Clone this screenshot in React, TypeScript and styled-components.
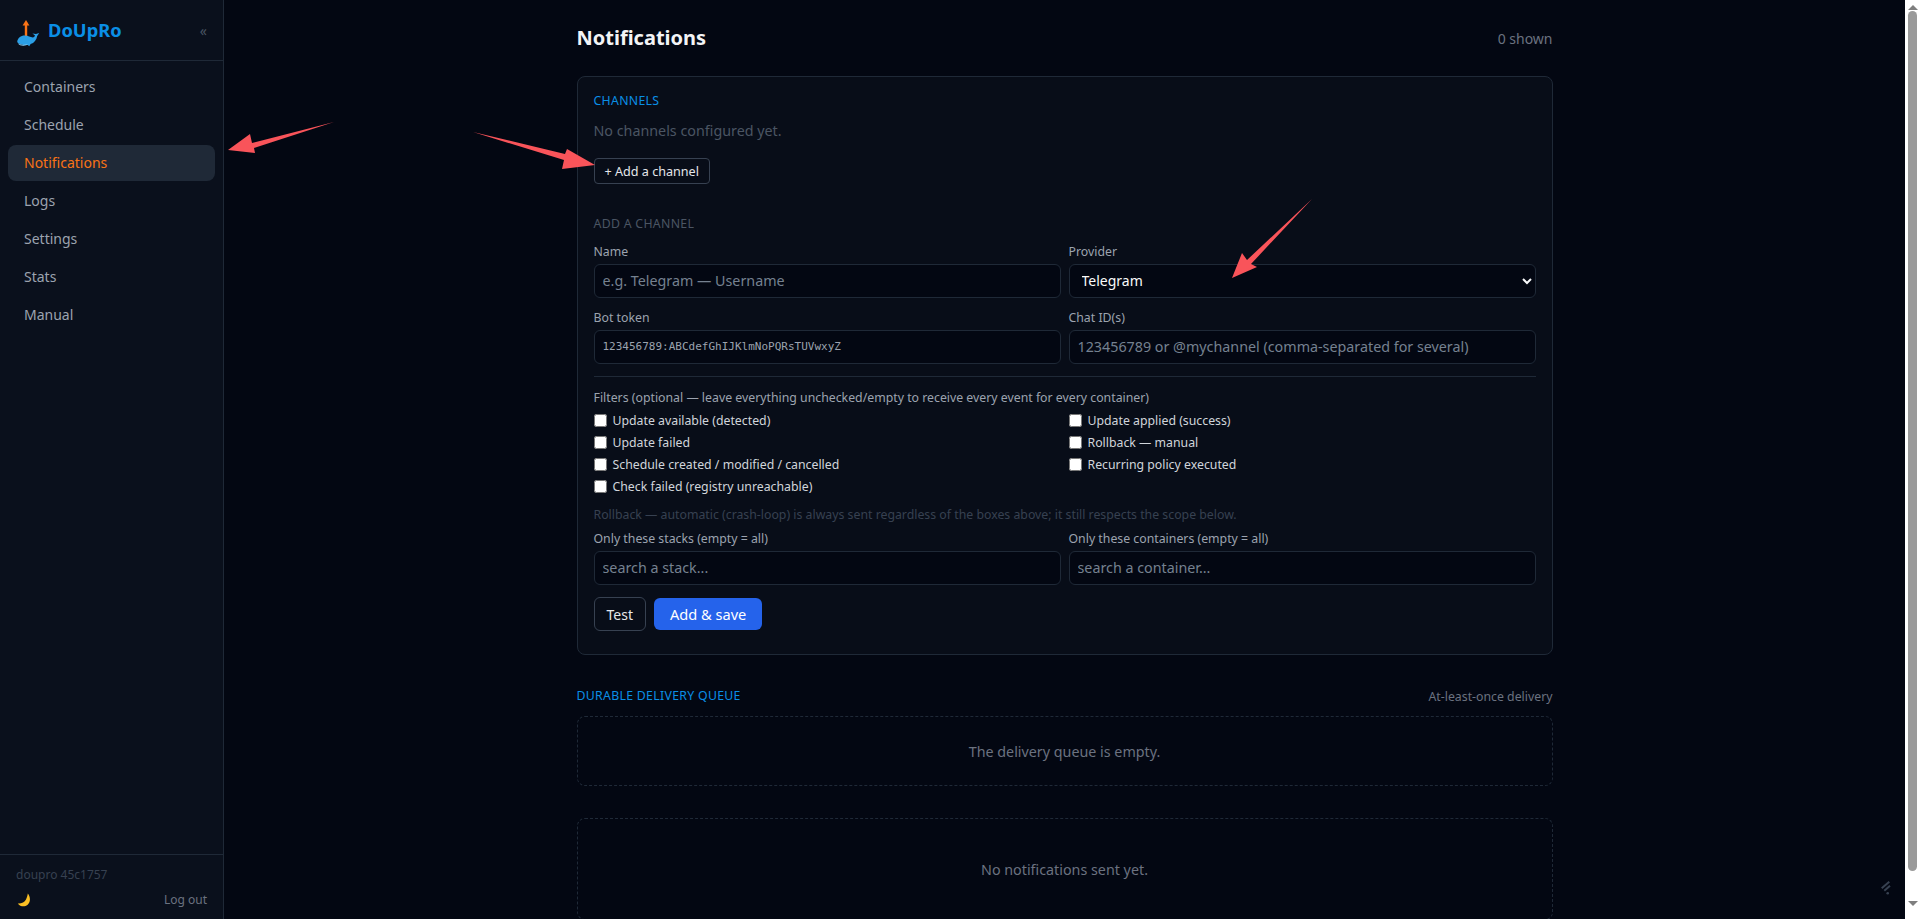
import React from 'react';
import styled, { createGlobalStyle } from 'styled-components';

const FONT = `"Noto Sans", "Open Sans", Arial, sans-serif`;

const GlobalStyle = createGlobalStyle`
  * { box-sizing: border-box; }
  html, body { margin: 0; height: 100%; overflow: hidden; }
  body { background: #030712; color: #e5e7eb; font-family: ${FONT}; font-size: 14px; }
  #root { height: 100%; }
`;

const Shell = styled.div`
  display: flex;
  height: 100vh;
  position: relative;
`;

const Sidebar = styled.aside`
  width: 224px;
  flex-shrink: 0;
  display: flex;
  flex-direction: column;
  background: #0a101c;
  border-right: 1px solid #1f2937;
`;

const Brand = styled.div`
  height: 61px;
  display: flex;
  align-items: center;
  padding: 0 16px;
  border-bottom: 1px solid #1f2937;
`;

const BrandName = styled.span`
  margin: 0 0 2px 8px;
  font-size: 18.3px;
  font-weight: 700;
  color: #0a8fe6;
  flex: 1;
`;

const Collapse = styled.span`
  color: #4b5563;
  font-size: 14px;
`;

const LogoMark = styled.svg`
  width: 24px;
  height: 32px;
  margin-top: 8px;
`;

const Nav = styled.nav`
  flex: 1;
  display: flex;
  flex-direction: column;
  gap: 2px;
  padding: 8px;
`;

const NavItem = styled.a<{ $active?: boolean }>`
  height: 36px;
  display: flex;
  align-items: center;
  padding: 0 16px 2px;
  border-radius: 8px;
  font-size: 14px;
  color: ${({ $active }) => ($active ? '#f97316' : '#9ca3af')};
  background: ${({ $active }) => ($active ? '#1f2937' : 'transparent')};
`;

const SideFooter = styled.div`
  height: 65px;
  border-top: 1px solid #1f2937;
  padding: 11px 16px 0;
`;

const Version = styled.div`
  font-size: 12px;
  color: #374151;
  line-height: 17px;
`;

const FooterRow = styled.div`
  display: flex;
  align-items: center;
  justify-content: space-between;
  margin-top: 8px;
  padding-left: 1px;
`;

const LogOut = styled.span`
  font-size: 12px;
  color: #6b7280;
`;

const Main = styled.main`
  flex: 1;
  min-width: 0;
  overflow: hidden;
`;

const ScrollRail = styled.div`
  width: 15px;
  flex-shrink: 0;
  display: flex;
  flex-direction: column;
  align-items: center;
  background: #fff;
  padding: 5px 0 7px;
`;

const RailArrow = styled.span<{ $down?: boolean }>`
  width: 0;
  height: 0;
  border-left: 5px solid transparent;
  border-right: 5px solid transparent;
  border-${({ $down }) => ($down ? 'top' : 'bottom')}: 5px solid #7f7f7f;
`;

const RailThumb = styled.div`
  width: 9px;
  height: 860px;
  margin: 1px 0 30px;
  background: #9a9a9a;
  border-radius: 5px;
`;

const Content = styled.div`
  width: 976px;
  margin: 0 auto;
`;

const PageHead = styled.header`
  display: flex;
  align-items: center;
  justify-content: space-between;
  height: 76px;
`;

const PageTitle = styled.h1`
  margin: 0 0 2px;
  font-size: 20px;
  font-weight: 700;
  color: #f3f4f6;
`;

const Muted = styled.span`
  font-size: 14px;
  color: #6b7280;
`;

const Card = styled.section`
  background: #080d18;
  border: 1px solid #1f2937;
  border-radius: 8px;
  padding: 16px 16px 23px;
`;

const SectionLabel = styled.div<{ $tone?: 'blue' | 'gray' }>`
  font-size: 12.3px;
  line-height: 16px;
  text-transform: uppercase;
  letter-spacing: 0.3px;
  color: ${({ $tone }) => ($tone === 'gray' ? '#4b5563' : '#0a8fe6')};
`;

const EmptyLine = styled.p`
  margin: 12px 0 17px;
  font-size: 14.3px;
  line-height: 20px;
  color: #4b5563;
`;

const SmallButton = styled.button`
  display: block;
  height: 26px;
  padding: 0 10px;
  font: 12.6px ${FONT};
  color: #e5e7eb;
  background: transparent;
  border: 1px solid #374151;
  border-radius: 4px;
`;

const FormTitle = styled(SectionLabel)`
  margin-top: 32px;
`;

const FieldGrid = styled.div<{ $tight?: boolean }>`
  display: grid;
  grid-template-columns: 1fr 1fr;
  column-gap: 8px;
  row-gap: 12px;
  margin-top: ${({ $tight }) => ($tight ? '8px' : '12px')};
`;

const Field = styled.label`
  display: flex;
  flex-direction: column;
  gap: 4px;
  min-width: 0;
`;

const FieldLabel = styled.span`
  font-size: 12.3px;
  line-height: 16px;
  color: #9ca3af;
`;

const TextInput = styled.input<{ $mono?: boolean }>`
  width: 100%;
  height: 34px;
  padding: 0 8px 2px;
  background: #030712;
  border: 1px solid #1f2937;
  border-radius: 6px;
  color: #e5e7eb;
  outline: none;
  font-family: ${({ $mono }) => ($mono ? `"DejaVu Sans Mono", "Liberation Mono", monospace` : FONT)};
  font-size: ${({ $mono }) => ($mono ? '11px' : '14.3px')};

  &::placeholder {
    color: ${({ $mono }) => ($mono ? '#9ca3af' : '#758190')};
    opacity: 1;
  }
`;

const Select = styled.select`
  width: 100%;
  height: 34px;
  padding: 0 8px 2px;
  background: #030712;
  border: 1px solid #1f2937;
  border-radius: 6px;
  color: #f9fafb;
  font: 14px ${FONT};
  color-scheme: dark;
  outline: none;
`;

const Divider = styled.hr`
  border: 0;
  border-top: 1px solid #1f2937;
  margin: 12px 0 13px;
`;

const FilterTitle = styled.div`
  font-size: 12.3px;
  line-height: 16px;
  color: #9ca3af;
`;

const CheckGrid = styled.div`
  display: grid;
  grid-template-columns: 1fr 1fr;
  column-gap: 8px;
  margin-top: 3px;
`;

const CheckRow = styled.label`
  height: 22px;
  display: flex;
  align-items: center;
  gap: 6px;
  font-size: 12.3px;
  color: #d1d5db;
`;

const Check = styled.input`
  width: 13px;
  height: 13px;
  margin: 0;
  color-scheme: light;
`;

const Hint = styled.p`
  margin: 10px 0 0;
  font-size: 12.3px;
  line-height: 16px;
  color: #374151;
`;

const Actions = styled.div`
  display: flex;
  align-items: center;
  gap: 8px;
  margin-top: 12px;
`;

const GhostButton = styled.button`
  height: 34px;
  padding: 0 12px;
  font: 14px ${FONT};
  color: #e5e7eb;
  background: transparent;
  border: 1px solid #374151;
  border-radius: 6px;
`;

const PrimaryButton = styled.button`
  height: 32px;
  padding: 0 16px;
  font: 14.6px ${FONT};
  color: #fff;
  background: #2563eb;
  border: 0;
  border-radius: 6px;
`;

const SectionHead = styled.div`
  display: flex;
  align-items: center;
  justify-content: space-between;
  margin-top: 33px;
  height: 16px;
`;

const HeadNote = styled.span`
  font-size: 12.3px;
  color: #6b7280;
`;

const EmptyBox = styled.div<{ $tall?: boolean }>`
  display: flex;
  align-items: center;
  justify-content: center;
  height: ${({ $tall }) => ($tall ? '102px' : '70px')};
  margin-top: ${({ $tall }) => ($tall ? '32px' : '12px')};
  border: 1px dashed #1f2937;
  border-radius: 8px;
  font-size: 14.3px;
  color: #6b7280;
`;

const Annotations = styled.svg`
  position: absolute;
  inset: 0;
  width: 100%;
  height: 100%;
  pointer-events: none;
`;

const CornerMark = styled.svg`
  position: absolute;
  left: 1878px;
  bottom: 24px;
  width: 16px;
  height: 16px;
  pointer-events: none;
`;

const navLinks = ['Containers', 'Schedule', 'Notifications', 'Logs', 'Settings', 'Stats', 'Manual'];

const filters = [
  'Update available (detected)',
  'Update applied (success)',
  'Update failed',
  'Rollback — manual',
  'Schedule created / modified / cancelled',
  'Recurring policy executed',
  'Check failed (registry unreachable)',
];

const WhaleLogo = () => (
  <LogoMark viewBox="0 0 24 32" aria-hidden="true">
    <path d="M10 18V6" stroke="#f97316" strokeWidth="2.4" />
    <path d="M10 2l3.4 5.4H6.6z" fill="#f97316" />
    <path
      d="M1.2 23.5c.6-3.4 3.4-6 7.6-6 3.4 0 5.6 1.8 8 2 1 0 1.8-.8 2.2-2l-2.6-2 3.6.6 3.2-1.2-2 3c-.6 3.8-3 7-6.6 8.2l-1.4 2.2-1.4-1.4c-1.4.2-3.4.3-5.2-.1-3.2-.7-5.6-1.7-5.4-3.3z"
      fill="#2b9fe6"
    />
    <path d="M2 25.5c2.6 1.2 6.6 1.6 10 .8-1.6 1.6-8 2.2-10-.8z" fill="#8fd3f7" />
  </LogoMark>
);

const MoonIcon = () => (
  <svg width="14" height="14" viewBox="0 0 14 14" aria-hidden="true">
    <path d="M10.8.6C13.8 4 13.6 9.4 10.4 12 7.6 14.2 3 13.6.8 10.4 4.4 10.6 7.6 9.4 9 6.4 9.9 4.6 10.6 2.6 10.8.6z" fill="#fbbf24" />
  </svg>
);

const App: React.FC = () => {
  return (
    <Shell>
      <GlobalStyle />
      <Sidebar>
        <Brand>
          <WhaleLogo />
          <BrandName>DoUpRo</BrandName>
          <Collapse>«</Collapse>
        </Brand>
        <Nav>
          {navLinks.map((link) => (
            <NavItem key={link} $active={link === 'Notifications'}>
              {link}
            </NavItem>
          ))}
        </Nav>
        <SideFooter>
          <Version>doupro 45c1757</Version>
          <FooterRow>
            <MoonIcon />
            <LogOut>Log out</LogOut>
          </FooterRow>
        </SideFooter>
      </Sidebar>

      <Main>
        <Content>
          <PageHead>
            <PageTitle>Notifications</PageTitle>
            <Muted>0 shown</Muted>
          </PageHead>

          <Card>
            <SectionLabel>Channels</SectionLabel>
            <EmptyLine>No channels configured yet.</EmptyLine>
            <SmallButton>+ Add a channel</SmallButton>

            <FormTitle $tone="gray">Add a channel</FormTitle>
            <FieldGrid>
              <Field>
                <FieldLabel>Name</FieldLabel>
                <TextInput placeholder="e.g. Telegram — Username" />
              </Field>
              <Field>
                <FieldLabel>Provider</FieldLabel>
                <Select defaultValue="telegram">
                  <option value="telegram">Telegram</option>
                </Select>
              </Field>
              <Field>
                <FieldLabel>Bot token</FieldLabel>
                <TextInput $mono placeholder="123456789:ABCdefGhIJKlmNoPQRsTUVwxyZ" />
              </Field>
              <Field>
                <FieldLabel>Chat ID(s)</FieldLabel>
                <TextInput placeholder="123456789 or @mychannel (comma-separated for several)" />
              </Field>
            </FieldGrid>

            <Divider />

            <FilterTitle>Filters (optional — leave everything unchecked/empty to receive every event for every container)</FilterTitle>
            <CheckGrid>
              {filters.map((text) => (
                <CheckRow key={text}>
                  <Check type="checkbox" />
                  {text}
                </CheckRow>
              ))}
            </CheckGrid>
            <Hint>Rollback — automatic (crash-loop) is always sent regardless of the boxes above; it still respects the scope below.</Hint>

            <FieldGrid $tight>
              <Field>
                <FieldLabel>Only these stacks (empty = all)</FieldLabel>
                <TextInput placeholder="search a stack..." />
              </Field>
              <Field>
                <FieldLabel>Only these containers (empty = all)</FieldLabel>
                <TextInput placeholder="search a container..." />
              </Field>
            </FieldGrid>

            <Actions>
              <GhostButton>Test</GhostButton>
              <PrimaryButton>Add &amp; save</PrimaryButton>
            </Actions>
          </Card>

          <SectionHead>
            <SectionLabel>Durable delivery queue</SectionLabel>
            <HeadNote>At-least-once delivery</HeadNote>
          </SectionHead>
          <EmptyBox>The delivery queue is empty.</EmptyBox>
          <EmptyBox $tall>No notifications sent yet.</EmptyBox>
        </Content>
      </Main>

      <ScrollRail>
        <RailArrow />
        <RailThumb />
        <RailArrow $down />
      </ScrollRail>

      <CornerMark viewBox="0 0 16 16" aria-hidden="true">
        <path d="M3.7 9.3l7.6-6.6M6.3 11.7l5.7-5" stroke="#374151" strokeWidth="2" fill="none" />
        <circle cx="9.7" cy="14.3" r="1.3" fill="#374151" />
      </CornerMark>

      <Annotations viewBox="0 0 1920 919" aria-hidden="true">
        <path d="M228 150l22-16 2 9 82-21-80 26 1 5z" fill="#f9545a" />
        <path d="M473 132l92 22 2-5 28 16-33 4 2-9z" fill="#f9545a" />
        <path d="M1312 199l-61 65 6 3-25 11 10-25 5 7z" fill="#f9545a" />
      </Annotations>
    </Shell>
  );
};

export default App;
